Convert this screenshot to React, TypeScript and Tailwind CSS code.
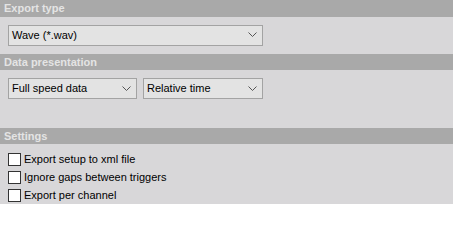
function Header({ title }: { title: string }) {
  return (
    <div className="flex h-[17px] items-center bg-[#a9a9a9] px-[4px] text-[11px] font-bold text-[#e4e4e4]">
      {title}
    </div>
  )
}

function Select({ value, width }: { value: string; width: string }) {
  return (
    <div
      className={`flex h-[21px] items-center justify-between border border-[#a3a3a3] bg-[#e3e3e3] pl-[3px] pr-[5px] text-[11px] text-black ${width}`}
    >
      <span>{value}</span>
      <svg width="9" height="6" viewBox="0 0 9 6" className="text-[#555]">
        <path d="M0.5 0.5 L4.5 4.5 L8.5 0.5" fill="none" stroke="currentColor" strokeWidth="1" />
      </svg>
    </div>
  )
}

function Check({ label }: { label: string }) {
  return (
    <div className="flex h-[18px] items-center gap-[3px] pl-[8px]">
      <div className="h-[13px] w-[13px] border border-[#333] bg-white" />
      <span>{label}</span>
    </div>
  )
}

export default function App() {
  return (
    <div className="flex h-[204px] w-[453px] flex-col overflow-hidden bg-[#d8d7d9] font-['Liberation_Sans',Arial,sans-serif] text-[11px] text-black">
      <Header title="Export type" />
      <div className="px-[8px] py-[8px]">
        <Select value="Wave (*.wav)" width="w-[255px]" />
      </div>
      <Header title="Data presentation" />
      <div className="flex h-[61px] items-start gap-[6px] px-[8px] pt-[8px]">
        <Select value="Full speed data" width="w-[129px]" />
        <Select value="Relative time" width="w-[120px]" />
      </div>
      <Header title="Settings" />
      <div className="flex flex-col pt-[6px]">
        <Check label="Export setup to xml file" />
        <Check label="Ignore gaps between triggers" />
        <Check label="Export per channel" />
      </div>
    </div>
  )
}
